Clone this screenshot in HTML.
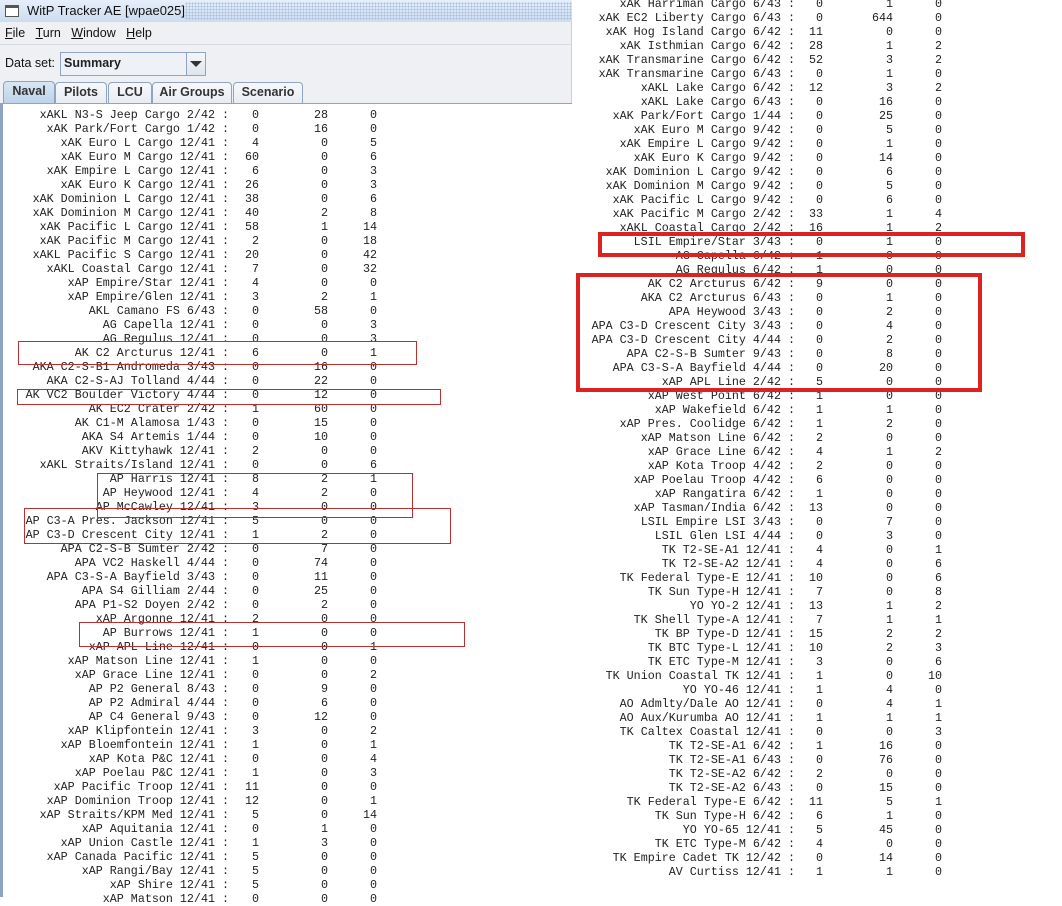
<!DOCTYPE html>
<html><head><meta charset="utf-8"><style>
*{margin:0;padding:0;box-sizing:border-box}
body{width:1062px;height:897px;overflow:hidden;background:#fff;position:relative;font-family:"Liberation Sans",sans-serif}
.r{position:absolute;height:14px;line-height:14px;font-family:"Liberation Mono",monospace;font-size:11.7px;color:#222;white-space:pre}
.r span{position:absolute;top:0;text-align:right;left:0}
.L .a{width:229px}.L .b{width:259px}.L .c{width:328px}.L .d{width:377px}
.R .a{width:795px}.R .b{width:823px}.R .c{width:893px}.R .d{width:942px}
.r{left:0}
.box{position:absolute}
.tb{position:absolute;left:0;top:0;width:572px;height:22px;background:linear-gradient(#e6eefa,#cddcf0)}
.tab{position:absolute;top:82px;height:21px;border:1px solid #8ea4c0;border-bottom:none;font-size:12.5px;font-weight:bold;color:#333;text-align:center;line-height:19px;background:linear-gradient(#f6f8fb,#e8edf3);border-radius:4px 4px 0 0}
</style></head><body>
<div class="tb"></div>
<div style="position:absolute;left:5px;top:5px;width:14px;height:12px;border:1px solid #555;background:#fff;border-top:3px solid #555"></div>
<div style="position:absolute;left:27px;top:3px;font-size:13px;color:#111">WitP Tracker AE [wpae025]</div>
<div style="position:absolute;left:185px;top:2px;width:387px;height:18px;background-image:radial-gradient(#a9bfdc 0.8px,transparent 0.9px);background-size:3px 3px"></div>
<div style="position:absolute;left:0;top:22px;width:572px;height:82px;background:#eef0f3;border-right:1px solid #c8d0da"></div>
<div style="position:absolute;left:0;top:44px;width:572px;height:1px;background:#d6dbe2"></div>
<div style="position:absolute;left:5px;top:26px;font-size:12.5px;color:#111"><u>F</u>ile&nbsp;&nbsp;&nbsp;<u>T</u>urn&nbsp;&nbsp;&nbsp;<u>W</u>indow&nbsp;&nbsp;&nbsp;<u>H</u>elp</div>
<div style="position:absolute;left:5px;top:56px;font-size:12.5px;color:#111">Data set:</div>
<div style="position:absolute;left:60px;top:52px;width:146px;height:24px;border:1px solid #8ea4c0;background:#eef2f6"></div>
<div style="position:absolute;left:64px;top:56px;font-size:12.5px;font-weight:bold;color:#222">Summary</div>
<div style="position:absolute;left:186px;top:53px;width:19px;height:22px;border-left:1px solid #8ea4c0;background:linear-gradient(#f4f6f9,#dfe5ec)"></div>
<div style="position:absolute;left:190px;top:61px;width:0;height:0;border-left:6px solid transparent;border-right:6px solid transparent;border-top:6px solid #333"></div>
<div class="tab" style="left:3px;width:52px;background:linear-gradient(#d9e6f3,#bcd2ea);top:81px;height:23px">Naval</div>
<div class="tab" style="left:55px;width:52px">Pilots</div>
<div class="tab" style="left:108px;width:44px">LCU</div>
<div class="tab" style="left:152px;width:80px">Air Groups</div>
<div class="tab" style="left:233px;width:70px">Scenario</div>
<div style="position:absolute;left:0;top:103px;width:572px;height:2px;background:#8ea4c0"></div>
<div style="position:absolute;left:0;top:104px;width:572px;height:793px;background:#fff"></div>
<div style="position:absolute;left:0;top:104px;width:3px;height:793px;background:#8ea4c0"></div>

<div class="r L" style="top:108px"><span class="a">xAKL N3-S Jeep Cargo 2/42 :</span><span class="b">0</span><span class="c">28</span><span class="d">0</span></div>
<div class="r L" style="top:122px"><span class="a">xAK Park/Fort Cargo 1/42 :</span><span class="b">0</span><span class="c">16</span><span class="d">0</span></div>
<div class="r L" style="top:136px"><span class="a">xAK Euro L Cargo 12/41 :</span><span class="b">4</span><span class="c">0</span><span class="d">5</span></div>
<div class="r L" style="top:150px"><span class="a">xAK Euro M Cargo 12/41 :</span><span class="b">60</span><span class="c">0</span><span class="d">6</span></div>
<div class="r L" style="top:164px"><span class="a">xAK Empire L Cargo 12/41 :</span><span class="b">6</span><span class="c">0</span><span class="d">3</span></div>
<div class="r L" style="top:178px"><span class="a">xAK Euro K Cargo 12/41 :</span><span class="b">26</span><span class="c">0</span><span class="d">3</span></div>
<div class="r L" style="top:192px"><span class="a">xAK Dominion L Cargo 12/41 :</span><span class="b">38</span><span class="c">0</span><span class="d">6</span></div>
<div class="r L" style="top:206px"><span class="a">xAK Dominion M Cargo 12/41 :</span><span class="b">40</span><span class="c">2</span><span class="d">8</span></div>
<div class="r L" style="top:220px"><span class="a">xAK Pacific L Cargo 12/41 :</span><span class="b">58</span><span class="c">1</span><span class="d">14</span></div>
<div class="r L" style="top:234px"><span class="a">xAK Pacific M Cargo 12/41 :</span><span class="b">2</span><span class="c">0</span><span class="d">18</span></div>
<div class="r L" style="top:248px"><span class="a">xAKL Pacific S Cargo 12/41 :</span><span class="b">20</span><span class="c">0</span><span class="d">42</span></div>
<div class="r L" style="top:262px"><span class="a">xAKL Coastal Cargo 12/41 :</span><span class="b">7</span><span class="c">0</span><span class="d">32</span></div>
<div class="r L" style="top:276px"><span class="a">xAP Empire/Star 12/41 :</span><span class="b">4</span><span class="c">0</span><span class="d">0</span></div>
<div class="r L" style="top:290px"><span class="a">xAP Empire/Glen 12/41 :</span><span class="b">3</span><span class="c">2</span><span class="d">1</span></div>
<div class="r L" style="top:304px"><span class="a">AKL Camano FS 6/43 :</span><span class="b">0</span><span class="c">58</span><span class="d">0</span></div>
<div class="r L" style="top:318px"><span class="a">AG Capella 12/41 :</span><span class="b">0</span><span class="c">0</span><span class="d">3</span></div>
<div class="r L" style="top:332px"><span class="a">AG Regulus 12/41 :</span><span class="b">0</span><span class="c">0</span><span class="d">3</span></div>
<div class="r L" style="top:346px"><span class="a">AK C2 Arcturus 12/41 :</span><span class="b">6</span><span class="c">0</span><span class="d">1</span></div>
<div class="r L" style="top:360px"><span class="a">AKA C2-S-B1 Andromeda 3/43 :</span><span class="b">0</span><span class="c">16</span><span class="d">0</span></div>
<div class="r L" style="top:374px"><span class="a">AKA C2-S-AJ Tolland 4/44 :</span><span class="b">0</span><span class="c">22</span><span class="d">0</span></div>
<div class="r L" style="top:388px"><span class="a">AK VC2 Boulder Victory 4/44 :</span><span class="b">0</span><span class="c">12</span><span class="d">0</span></div>
<div class="r L" style="top:402px"><span class="a">AK EC2 Crater 2/42 :</span><span class="b">1</span><span class="c">60</span><span class="d">0</span></div>
<div class="r L" style="top:416px"><span class="a">AK C1-M Alamosa 1/43 :</span><span class="b">0</span><span class="c">15</span><span class="d">0</span></div>
<div class="r L" style="top:430px"><span class="a">AKA S4 Artemis 1/44 :</span><span class="b">0</span><span class="c">10</span><span class="d">0</span></div>
<div class="r L" style="top:444px"><span class="a">AKV Kittyhawk 12/41 :</span><span class="b">2</span><span class="c">0</span><span class="d">0</span></div>
<div class="r L" style="top:458px"><span class="a">xAKL Straits/Island 12/41 :</span><span class="b">0</span><span class="c">0</span><span class="d">6</span></div>
<div class="r L" style="top:472px"><span class="a">AP Harris 12/41 :</span><span class="b">8</span><span class="c">2</span><span class="d">1</span></div>
<div class="r L" style="top:486px"><span class="a">AP Heywood 12/41 :</span><span class="b">4</span><span class="c">2</span><span class="d">0</span></div>
<div class="r L" style="top:500px"><span class="a">AP McCawley 12/41 :</span><span class="b">3</span><span class="c">0</span><span class="d">0</span></div>
<div class="r L" style="top:514px"><span class="a">AP C3-A Pres. Jackson 12/41 :</span><span class="b">5</span><span class="c">0</span><span class="d">0</span></div>
<div class="r L" style="top:528px"><span class="a">AP C3-D Crescent City 12/41 :</span><span class="b">1</span><span class="c">2</span><span class="d">0</span></div>
<div class="r L" style="top:542px"><span class="a">APA C2-S-B Sumter 2/42 :</span><span class="b">0</span><span class="c">7</span><span class="d">0</span></div>
<div class="r L" style="top:556px"><span class="a">APA VC2 Haskell 4/44 :</span><span class="b">0</span><span class="c">74</span><span class="d">0</span></div>
<div class="r L" style="top:570px"><span class="a">APA C3-S-A Bayfield 3/43 :</span><span class="b">0</span><span class="c">11</span><span class="d">0</span></div>
<div class="r L" style="top:584px"><span class="a">APA S4 Gilliam 2/44 :</span><span class="b">0</span><span class="c">25</span><span class="d">0</span></div>
<div class="r L" style="top:598px"><span class="a">APA P1-S2 Doyen 2/42 :</span><span class="b">0</span><span class="c">2</span><span class="d">0</span></div>
<div class="r L" style="top:612px"><span class="a">xAP Argonne 12/41 :</span><span class="b">2</span><span class="c">0</span><span class="d">0</span></div>
<div class="r L" style="top:626px"><span class="a">AP Burrows 12/41 :</span><span class="b">1</span><span class="c">0</span><span class="d">0</span></div>
<div class="r L" style="top:640px"><span class="a">xAP APL Line 12/41 :</span><span class="b">0</span><span class="c">0</span><span class="d">1</span></div>
<div class="r L" style="top:654px"><span class="a">xAP Matson Line 12/41 :</span><span class="b">1</span><span class="c">0</span><span class="d">0</span></div>
<div class="r L" style="top:668px"><span class="a">xAP Grace Line 12/41 :</span><span class="b">0</span><span class="c">0</span><span class="d">2</span></div>
<div class="r L" style="top:682px"><span class="a">AP P2 General 8/43 :</span><span class="b">0</span><span class="c">9</span><span class="d">0</span></div>
<div class="r L" style="top:696px"><span class="a">AP P2 Admiral 4/44 :</span><span class="b">0</span><span class="c">6</span><span class="d">0</span></div>
<div class="r L" style="top:710px"><span class="a">AP C4 General 9/43 :</span><span class="b">0</span><span class="c">12</span><span class="d">0</span></div>
<div class="r L" style="top:724px"><span class="a">xAP Klipfontein 12/41 :</span><span class="b">3</span><span class="c">0</span><span class="d">2</span></div>
<div class="r L" style="top:738px"><span class="a">xAP Bloemfontein 12/41 :</span><span class="b">1</span><span class="c">0</span><span class="d">1</span></div>
<div class="r L" style="top:752px"><span class="a">xAP Kota P&amp;C 12/41 :</span><span class="b">0</span><span class="c">0</span><span class="d">4</span></div>
<div class="r L" style="top:766px"><span class="a">xAP Poelau P&amp;C 12/41 :</span><span class="b">1</span><span class="c">0</span><span class="d">3</span></div>
<div class="r L" style="top:780px"><span class="a">xAP Pacific Troop 12/41 :</span><span class="b">11</span><span class="c">0</span><span class="d">0</span></div>
<div class="r L" style="top:794px"><span class="a">xAP Dominion Troop 12/41 :</span><span class="b">12</span><span class="c">0</span><span class="d">1</span></div>
<div class="r L" style="top:808px"><span class="a">xAP Straits/KPM Med 12/41 :</span><span class="b">5</span><span class="c">0</span><span class="d">14</span></div>
<div class="r L" style="top:822px"><span class="a">xAP Aquitania 12/41 :</span><span class="b">0</span><span class="c">1</span><span class="d">0</span></div>
<div class="r L" style="top:836px"><span class="a">xAP Union Castle 12/41 :</span><span class="b">1</span><span class="c">3</span><span class="d">0</span></div>
<div class="r L" style="top:850px"><span class="a">xAP Canada Pacific 12/41 :</span><span class="b">5</span><span class="c">0</span><span class="d">0</span></div>
<div class="r L" style="top:864px"><span class="a">xAP Rangi/Bay 12/41 :</span><span class="b">5</span><span class="c">0</span><span class="d">0</span></div>
<div class="r L" style="top:878px"><span class="a">xAP Shire 12/41 :</span><span class="b">5</span><span class="c">0</span><span class="d">0</span></div>
<div class="r L" style="top:892px"><span class="a">xAP Matson 12/41 :</span><span class="b">0</span><span class="c">0</span><span class="d">0</span></div>

<div class="box" style="left:18px;top:341px;width:399px;height:24px;border:1px solid #b83030"></div>
<div class="box" style="left:17px;top:389px;width:424px;height:16px;border:1px solid #b83030"></div>
<div class="box" style="left:97px;top:473px;width:316px;height:45px;border:1px solid #b83030"></div>
<div class="box" style="left:24px;top:508px;width:427px;height:36px;border:1px solid #b83030"></div>
<div class="box" style="left:79px;top:622px;width:386px;height:25px;border:1px solid #b83030"></div>

<div class="r R" style="top:-3px"><span class="a">xAK Harriman Cargo 6/43 :</span><span class="b">0</span><span class="c">1</span><span class="d">0</span></div>
<div class="r R" style="top:11px"><span class="a">xAK EC2 Liberty Cargo 6/43 :</span><span class="b">0</span><span class="c">644</span><span class="d">0</span></div>
<div class="r R" style="top:25px"><span class="a">xAK Hog Island Cargo 6/42 :</span><span class="b">11</span><span class="c">0</span><span class="d">0</span></div>
<div class="r R" style="top:39px"><span class="a">xAK Isthmian Cargo 6/42 :</span><span class="b">28</span><span class="c">1</span><span class="d">2</span></div>
<div class="r R" style="top:53px"><span class="a">xAK Transmarine Cargo 6/42 :</span><span class="b">52</span><span class="c">3</span><span class="d">2</span></div>
<div class="r R" style="top:67px"><span class="a">xAK Transmarine Cargo 6/43 :</span><span class="b">0</span><span class="c">1</span><span class="d">0</span></div>
<div class="r R" style="top:81px"><span class="a">xAKL Lake Cargo 6/42 :</span><span class="b">12</span><span class="c">3</span><span class="d">2</span></div>
<div class="r R" style="top:95px"><span class="a">xAKL Lake Cargo 6/43 :</span><span class="b">0</span><span class="c">16</span><span class="d">0</span></div>
<div class="r R" style="top:109px"><span class="a">xAK Park/Fort Cargo 1/44 :</span><span class="b">0</span><span class="c">25</span><span class="d">0</span></div>
<div class="r R" style="top:123px"><span class="a">xAK Euro M Cargo 9/42 :</span><span class="b">0</span><span class="c">5</span><span class="d">0</span></div>
<div class="r R" style="top:137px"><span class="a">xAK Empire L Cargo 9/42 :</span><span class="b">0</span><span class="c">1</span><span class="d">0</span></div>
<div class="r R" style="top:151px"><span class="a">xAK Euro K Cargo 9/42 :</span><span class="b">0</span><span class="c">14</span><span class="d">0</span></div>
<div class="r R" style="top:165px"><span class="a">xAK Dominion L Cargo 9/42 :</span><span class="b">0</span><span class="c">6</span><span class="d">0</span></div>
<div class="r R" style="top:179px"><span class="a">xAK Dominion M Cargo 9/42 :</span><span class="b">0</span><span class="c">5</span><span class="d">0</span></div>
<div class="r R" style="top:193px"><span class="a">xAK Pacific L Cargo 9/42 :</span><span class="b">0</span><span class="c">6</span><span class="d">0</span></div>
<div class="r R" style="top:207px"><span class="a">xAK Pacific M Cargo 2/42 :</span><span class="b">33</span><span class="c">1</span><span class="d">4</span></div>
<div class="r R" style="top:221px"><span class="a">xAKL Coastal Cargo 2/42 :</span><span class="b">16</span><span class="c">1</span><span class="d">2</span></div>
<div class="r R" style="top:235px"><span class="a">LSIL Empire/Star 3/43 :</span><span class="b">0</span><span class="c">1</span><span class="d">0</span></div>
<div class="r R" style="top:249px"><span class="a">AG Capella 6/42 :</span><span class="b">1</span><span class="c">0</span><span class="d">0</span></div>
<div class="r R" style="top:263px"><span class="a">AG Regulus 6/42 :</span><span class="b">1</span><span class="c">0</span><span class="d">0</span></div>
<div class="r R" style="top:277px"><span class="a">AK C2 Arcturus 6/42 :</span><span class="b">9</span><span class="c">0</span><span class="d">0</span></div>
<div class="r R" style="top:291px"><span class="a">AKA C2 Arcturus 6/43 :</span><span class="b">0</span><span class="c">1</span><span class="d">0</span></div>
<div class="r R" style="top:305px"><span class="a">APA Heywood 3/43 :</span><span class="b">0</span><span class="c">2</span><span class="d">0</span></div>
<div class="r R" style="top:319px"><span class="a">APA C3-D Crescent City 3/43 :</span><span class="b">0</span><span class="c">4</span><span class="d">0</span></div>
<div class="r R" style="top:333px"><span class="a">APA C3-D Crescent City 4/44 :</span><span class="b">0</span><span class="c">2</span><span class="d">0</span></div>
<div class="r R" style="top:347px"><span class="a">APA C2-S-B Sumter 9/43 :</span><span class="b">0</span><span class="c">8</span><span class="d">0</span></div>
<div class="r R" style="top:361px"><span class="a">APA C3-S-A Bayfield 4/44 :</span><span class="b">0</span><span class="c">20</span><span class="d">0</span></div>
<div class="r R" style="top:375px"><span class="a">xAP APL Line 2/42 :</span><span class="b">5</span><span class="c">0</span><span class="d">0</span></div>
<div class="r R" style="top:389px"><span class="a">xAP West Point 6/42 :</span><span class="b">1</span><span class="c">0</span><span class="d">0</span></div>
<div class="r R" style="top:403px"><span class="a">xAP Wakefield 6/42 :</span><span class="b">1</span><span class="c">1</span><span class="d">0</span></div>
<div class="r R" style="top:417px"><span class="a">xAP Pres. Coolidge 6/42 :</span><span class="b">1</span><span class="c">2</span><span class="d">0</span></div>
<div class="r R" style="top:431px"><span class="a">xAP Matson Line 6/42 :</span><span class="b">2</span><span class="c">0</span><span class="d">0</span></div>
<div class="r R" style="top:445px"><span class="a">xAP Grace Line 6/42 :</span><span class="b">4</span><span class="c">1</span><span class="d">2</span></div>
<div class="r R" style="top:459px"><span class="a">xAP Kota Troop 4/42 :</span><span class="b">2</span><span class="c">0</span><span class="d">0</span></div>
<div class="r R" style="top:473px"><span class="a">xAP Poelau Troop 4/42 :</span><span class="b">6</span><span class="c">0</span><span class="d">0</span></div>
<div class="r R" style="top:487px"><span class="a">xAP Rangatira 6/42 :</span><span class="b">1</span><span class="c">0</span><span class="d">0</span></div>
<div class="r R" style="top:501px"><span class="a">xAP Tasman/India 6/42 :</span><span class="b">13</span><span class="c">0</span><span class="d">0</span></div>
<div class="r R" style="top:515px"><span class="a">LSIL Empire LSI 3/43 :</span><span class="b">0</span><span class="c">7</span><span class="d">0</span></div>
<div class="r R" style="top:529px"><span class="a">LSIL Glen LSI 4/44 :</span><span class="b">0</span><span class="c">3</span><span class="d">0</span></div>
<div class="r R" style="top:543px"><span class="a">TK T2-SE-A1 12/41 :</span><span class="b">4</span><span class="c">0</span><span class="d">1</span></div>
<div class="r R" style="top:557px"><span class="a">TK T2-SE-A2 12/41 :</span><span class="b">4</span><span class="c">0</span><span class="d">6</span></div>
<div class="r R" style="top:571px"><span class="a">TK Federal Type-E 12/41 :</span><span class="b">10</span><span class="c">0</span><span class="d">6</span></div>
<div class="r R" style="top:585px"><span class="a">TK Sun Type-H 12/41 :</span><span class="b">7</span><span class="c">0</span><span class="d">8</span></div>
<div class="r R" style="top:599px"><span class="a">YO YO-2 12/41 :</span><span class="b">13</span><span class="c">1</span><span class="d">2</span></div>
<div class="r R" style="top:613px"><span class="a">TK Shell Type-A 12/41 :</span><span class="b">7</span><span class="c">1</span><span class="d">1</span></div>
<div class="r R" style="top:627px"><span class="a">TK BP Type-D 12/41 :</span><span class="b">15</span><span class="c">2</span><span class="d">2</span></div>
<div class="r R" style="top:641px"><span class="a">TK BTC Type-L 12/41 :</span><span class="b">10</span><span class="c">2</span><span class="d">3</span></div>
<div class="r R" style="top:655px"><span class="a">TK ETC Type-M 12/41 :</span><span class="b">3</span><span class="c">0</span><span class="d">6</span></div>
<div class="r R" style="top:669px"><span class="a">TK Union Coastal TK 12/41 :</span><span class="b">1</span><span class="c">0</span><span class="d">10</span></div>
<div class="r R" style="top:683px"><span class="a">YO YO-46 12/41 :</span><span class="b">1</span><span class="c">4</span><span class="d">0</span></div>
<div class="r R" style="top:697px"><span class="a">AO Admlty/Dale AO 12/41 :</span><span class="b">0</span><span class="c">4</span><span class="d">1</span></div>
<div class="r R" style="top:711px"><span class="a">AO Aux/Kurumba AO 12/41 :</span><span class="b">1</span><span class="c">1</span><span class="d">1</span></div>
<div class="r R" style="top:725px"><span class="a">TK Caltex Coastal 12/41 :</span><span class="b">0</span><span class="c">0</span><span class="d">3</span></div>
<div class="r R" style="top:739px"><span class="a">TK T2-SE-A1 6/42 :</span><span class="b">1</span><span class="c">16</span><span class="d">0</span></div>
<div class="r R" style="top:753px"><span class="a">TK T2-SE-A1 6/43 :</span><span class="b">0</span><span class="c">76</span><span class="d">0</span></div>
<div class="r R" style="top:767px"><span class="a">TK T2-SE-A2 6/42 :</span><span class="b">2</span><span class="c">0</span><span class="d">0</span></div>
<div class="r R" style="top:781px"><span class="a">TK T2-SE-A2 6/43 :</span><span class="b">0</span><span class="c">15</span><span class="d">0</span></div>
<div class="r R" style="top:795px"><span class="a">TK Federal Type-E 6/42 :</span><span class="b">11</span><span class="c">5</span><span class="d">1</span></div>
<div class="r R" style="top:809px"><span class="a">TK Sun Type-H 6/42 :</span><span class="b">6</span><span class="c">1</span><span class="d">0</span></div>
<div class="r R" style="top:823px"><span class="a">YO YO-65 12/41 :</span><span class="b">5</span><span class="c">45</span><span class="d">0</span></div>
<div class="r R" style="top:837px"><span class="a">TK ETC Type-M 6/42 :</span><span class="b">4</span><span class="c">0</span><span class="d">0</span></div>
<div class="r R" style="top:851px"><span class="a">TK Empire Cadet TK 12/42 :</span><span class="b">0</span><span class="c">14</span><span class="d">0</span></div>
<div class="r R" style="top:865px"><span class="a">AV Curtiss 12/41 :</span><span class="b">1</span><span class="c">1</span><span class="d">0</span></div>

<div class="box" style="left:598px;top:232px;width:427px;height:25px;border:4px solid #dd2222"></div>
<div class="box" style="left:576px;top:273px;width:406px;height:119px;border:4px solid #dd2222"></div>
</body></html>
